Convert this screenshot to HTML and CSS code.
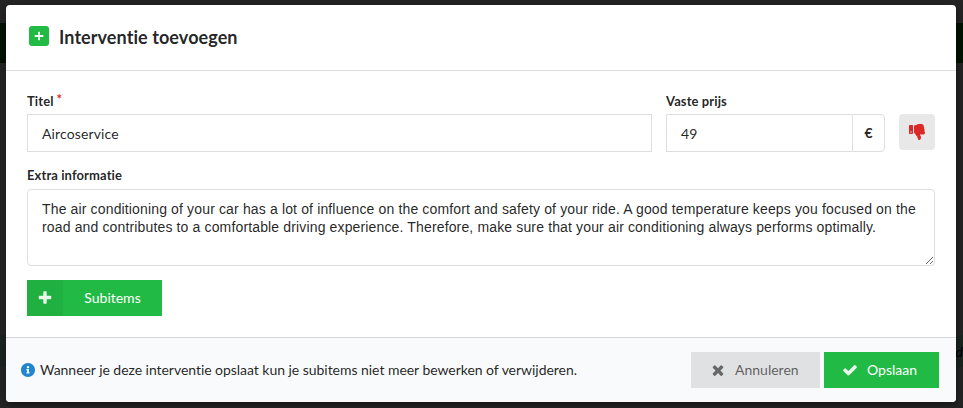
FILE: index.html
```html
<!DOCTYPE html>
<html lang="nl">
<head>
  <meta charset="UTF-8" />
  <meta name="viewport" content="width=device-width, initial-scale=1.0"/>
  <title>Interventie toevoegen</title>
  <link rel="stylesheet" href="styles.css">
</head>
<body>
  <!-- dimmed page behind the modal -->
  <div class="page-bar"></div>
  <div class="page-row">ed</div>

  <div class="modal">
    <div class="header">
      <span class="header-icon">
        <svg width="10" height="10" viewBox="0 0 10 10"><path d="M5 .7v8.6M.7 5h8.6" stroke="#fff" stroke-width="1.8"/></svg>
      </span>
      <h1>Interventie toevoegen</h1>
    </div>

    <form class="content">
      <div class="fields">
        <div class="field title-field">
          <label for="title">Titel<span class="required">*</span></label>
          <input type="text" id="title" value="Aircoservice" />
        </div>
        <div class="field price-field">
          <label for="price">Vaste prijs</label>
          <div class="labeled-input">
            <input type="text" id="price" value="49" />
            <div class="currency">€</div>
          </div>
        </div>
        <button type="button" class="thumb-button">
          <svg width="16" height="16" viewBox="0 0 512 512"><path d="M0 56v240c0 13.255 10.745 24 24 24h80c13.255 0 24-10.745 24-24V56c0-13.255-10.745-24-24-24H24C10.745 32 0 42.745 0 56zm40 200c0-13.255 10.745-24 24-24s24 10.745 24 24-10.745 24-24 24-24-10.745-24-24zm272 256c-20.183 0-29.485-39.293-33.931-57.795-5.206-21.666-10.589-44.07-25.393-58.902-32.469-32.524-49.503-73.967-89.117-113.111a11.98 11.98 0 0 1-3.558-8.521V59.901c0-6.541 5.243-11.878 11.783-11.998 15.831-.29 36.694-9.079 52.651-16.178C256.189 17.598 295.709.017 343.995 0h2.844c42.777 0 93.363.413 113.774 29.737 8.392 12.057 10.446 27.034 6.148 44.632 16.312 17.053 25.063 48.863 16.382 74.757 17.544 23.432 19.143 56.132 9.308 79.469l.11.11c11.893 11.949 19.523 31.259 19.439 49.197-.156 30.352-26.157 58.098-59.553 58.098H350.723C358.03 364.34 384 388.132 384 430.548 384 504 336 512 312 512z"/></svg>
        </button>
      </div>
      <div class="field info-field">
        <label for="info">Extra informatie</label>
        <textarea id="info" spellcheck="false">The air conditioning of your car has a lot of influence on the comfort and safety of your ride. A good temperature keeps you focused on the road and contributes to a comfortable driving experience. Therefore, make sure that your air conditioning always performs optimally.</textarea>
      </div>
      <button type="button" class="button green subitems">
        <span class="button-icon">
          <svg width="16" height="16" viewBox="0 0 1792 1792"><path d="M1600 736v192q0 40-28 68t-68 28h-416v416q0 40-28 68t-68 28h-192q-40 0-68-28t-28-68v-416h-416q-40 0-68-28t-28-68v-192q0-40 28-68t68-28h416v-416q0-40 28-68t68-28h192q40 0 68 28t28 68v416h416q40 0 68 28t28 68z"/></svg>
        </span>
        <span class="button-text">Subitems</span>
      </button>
    </form>

    <div class="actions">
      <svg class="info-icon" width="14" height="14" viewBox="8 8 496 496"><path d="M256 8C119.043 8 8 119.083 8 256c0 136.997 111.043 248 248 248s248-111.003 248-248C504 119.083 392.957 8 256 8zm0 110c23.196 0 42 18.804 42 42s-18.804 42-42 42-42-18.804-42-42 18.804-42 42-42zm56 254c0 6.627-5.373 12-12 12h-88c-6.627 0-12-5.373-12-12v-24c0-6.627 5.373-12 12-12h12v-64h-12c-6.627 0-12-5.373-12-12v-24c0-6.627 5.373-12 12-12h64c6.627 0 12 5.373 12 12v100h12c6.627 0 12 5.373 12 12v24z"/></svg>
      <span class="message">Wanneer je deze interventie opslaat kun je subitems niet meer bewerken of verwijderen.</span>
      <button type="button" class="button cancel">
        <svg width="16" height="16" viewBox="0 0 1792 1792"><path d="M1490 1322q0 40-28 68l-136 136q-28 28-68 28t-68-28l-294-294-294 294q-28 28-68 28t-68-28l-136-136q-28-28-28-68t28-68l294-294-294-294q-28-28-28-68t28-68l136-136q28-28 68-28t68 28l294 294 294-294q28-28 68-28t68 28l136 136q28 28 28 68t-28 68l-294 294 294 294q28 28 28 68z"/></svg>
        Annuleren
      </button>
      <button type="button" class="button green save">
        <svg width="16" height="16" viewBox="0 0 1792 1792"><path d="M1671 566q0 40-28 68l-724 724-136 136q-28 28-68 28t-68-28l-136-136-362-362q-28-28-28-68t28-68l136-136q28-28 68-28t68 28l294 295 656-657q28-28 68-28t68 28l136 136q28 28 28 68z"/></svg>
        Opslaan
      </button>
    </div>
  </div>
</body>
</html>
```
FILE: styles.css
```css
* {
  box-sizing: border-box;
}
body {
  margin: 0;
  height: 408px;
  padding: 5px 7px 6px 6px;
  overflow: hidden;
  position: relative;
  background: #252525;
  color: rgba(0, 0, 0, 0.87);
  font-family: Lato, "Liberation Sans", sans-serif;
  font-size: 14px;
  line-height: 18px;
}
.page-bar {
  position: absolute;
  top: 23px;
  left: 0;
  width: 100%;
  height: 40px;
  background: #001202;
}
.page-row {
  position: absolute;
  top: 335px;
  left: 0;
  width: 100%;
  height: 32px;
  background: #1c2521;
  color: #000;
  font-style: italic;
  line-height: 34px;
  text-align: right;
}
.modal {
  position: relative;
  display: flex;
  flex-direction: column;
  height: 397px;
  background: #fff;
  border-radius: 4px;
  overflow: hidden;
  box-shadow: 1px 3px 3px 0 rgba(0, 0, 0, 0.2), 1px 3px 15px 2px rgba(0, 0, 0, 0.2);
}
.header {
  display: flex;
  align-items: center;
  height: 66px;
  padding: 0 23px 3px;
  border-bottom: 1px solid #dededf;
}
.header-icon {
  display: flex;
  align-items: center;
  justify-content: center;
  width: 20px;
  height: 20px;
  margin-right: 10px;
  background: #21ba45;
  border-radius: 3px;
}
.header h1 {
  margin: 3px 0 0;
  font-size: 18px;
  letter-spacing: 0.08px;
  line-height: 23px;
}
.content {
  flex: 1;
  padding: 21px;
}
.fields {
  display: flex;
  align-items: flex-end;
  margin-bottom: 14px;
}
.field label {
  display: block;
  margin-bottom: 4px;
  font-size: 13px;
  font-weight: bold;
  letter-spacing: 0.1px;
  line-height: 18px;
}
.info-field label {
  margin-bottom: 5px;
}
.required {
  margin-left: 3px;
  color: #db2828;
  vertical-align: top;
  line-height: 14px;
}
.field input {
  width: 100%;
  height: 38px;
  padding: 0 14px;
  border: 1px solid #dededf;
  color: rgba(0, 0, 0, 0.87);
  font-family: inherit;
  font-size: 14px;
  letter-spacing: 0.12px;
  outline: none;
}
.title-field {
  width: 625px;
  margin-right: 14px;
}
.price-field {
  width: 219px;
  margin-right: 14px;
}
.labeled-input {
  display: flex;
}
.labeled-input input {
  flex: 1;
  min-width: 0;
  border-right: 0;
}
.currency {
  width: 33px;
  height: 38px;
  border: 1px solid #dededf;
  border-radius: 0 4px 4px 0;
  font-weight: bold;
  line-height: 36px;
  text-align: center;
}
.thumb-button {
  display: flex;
  align-items: center;
  justify-content: center;
  width: 36px;
  height: 36px;
  margin-bottom: 2px;
  padding: 0;
  border: 0;
  border-radius: 4px;
  background: #e8e8e8;
}
.thumb-button svg {
  fill: #db2828;
}
.field textarea {
  display: block;
  width: 100%;
  height: 77px;
  padding: 10px 14px;
  border: 1px solid #dededf;
  border-radius: 4px;
  color: rgba(0, 0, 0, 0.87);
  font-family: "Liberation Sans", Arial, sans-serif;
  font-size: 14px;
  letter-spacing: 0.145px;
  line-height: 18px;
  outline: none;
  resize: vertical;
}
.button {
  display: flex;
  align-items: center;
  height: 36px;
  padding: 0 0 1px;
  border: 0;
  font-family: inherit;
  font-size: 14px;
}
.button svg {
  opacity: 0.9;
}
.green {
  background: #21ba45;
  color: #fff;
}
.green svg {
  fill: #fff;
}
.subitems {
  width: 135px;
  margin-top: 14px;
  padding: 0;
}
.button-icon {
  display: flex;
  align-items: center;
  justify-content: center;
  width: 36px;
  height: 36px;
  background: rgba(0, 0, 0, 0.05);
}
.button-text {
  flex: 1;
  padding-bottom: 1px;
  text-align: center;
}
.actions {
  display: flex;
  align-items: center;
  height: 65px;
  padding: 0 17px 0 15px;
  background: #f9fafb;
  border-top: 1px solid #d4d8dc;
}
.info-icon {
  margin-right: 5px;
  fill: #2185d0;
}
.message {
  flex: 1;
  letter-spacing: -0.04px;
}
.cancel {
  width: 129px;
  margin-right: 4px;
  padding-left: 19px;
  background: #e0e1e2;
  color: rgba(0, 0, 0, 0.6);
}
.cancel svg {
  margin-right: 9px;
  fill: rgba(0, 0, 0, 0.6);
}
.save {
  width: 115px;
  padding-left: 18px;
}
.save svg {
  margin-right: 9px;
}
```
